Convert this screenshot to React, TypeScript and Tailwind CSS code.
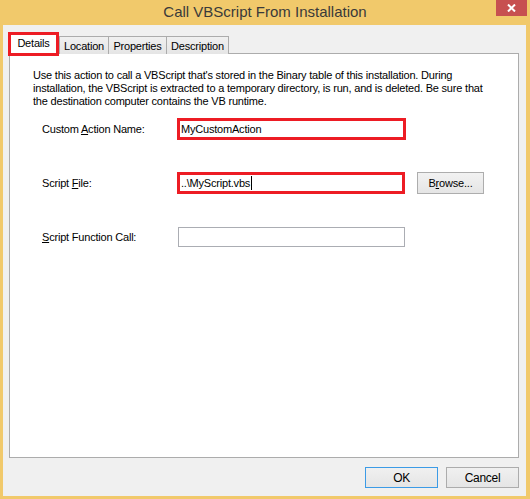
import type { ReactNode } from 'react';

const ui = "font-['Liberation_Sans',Arial,sans-serif] text-[11px] tracking-[-0.2px] text-black";

export default function App() {
  return (
    <div className={`flex h-[499px] w-[530px] flex-col bg-[#f1c96b] ${ui}`}>
      <TitleBar />
      <div className="ml-[3px] mr-[4px] mb-[3px] flex flex-1 flex-col bg-[#f0f0f0] pt-[6px] pl-[6px] pr-[7px]">
        <Tabs />
        <div className="flex h-[405px] w-[510px] flex-col border border-[#acacac] bg-white pt-[15px]">
          <p className="whitespace-nowrap pl-[23px] leading-[13px]">
            Use this action to call a VBScript that's stored in the Binary table of this installation. During
            <br />
            installation, the VBScript is extracted to a temporary directory, is run, and is deleted. Be sure that
            <br />
            the destination computer contains the VB runtime.
          </p>

          <div className="mt-[10px] flex items-center pl-[32px]">
            <Label>
              Custom <u>A</u>ction Name:
            </Label>
            <div className="flex h-[22px] w-[229px] items-center border-[3px] border-[#ed1c24] pl-[1px]">
              MyCustomAction
            </div>
          </div>

          <div className="mt-[32px] flex items-center pl-[32px]">
            <Label>
              Script <u>F</u>ile:
            </Label>
            <div className="flex h-[22px] w-[228px] items-center border-[3px] border-[#ed1c24] pl-[1px]">
              ..\MyScript.vbs
              <span className="ml-[1px] h-[14px] w-px bg-black" />
            </div>
            <button className="ml-[12px] h-[22px] w-[67px] border border-[#adadad] bg-gradient-to-b from-[#f2f2f2] to-[#e5e5e5]">
              B<u>r</u>owse...
            </button>
          </div>

          <div className="mt-[33px] flex items-center pl-[32px]">
            <Label>
              <u>S</u>cript Function Call:
            </Label>
            <div className="ml-[1px] h-[20px] w-[227px] border border-[#abadb3] bg-white" />
          </div>
        </div>

        <div className="mt-[9px] flex justify-end gap-[8px]">
          <DialogButton primary>OK</DialogButton>
          <DialogButton>Cancel</DialogButton>
        </div>
      </div>
    </div>
  );
}

function TitleBar() {
  return (
    <div className="relative flex h-[25px] items-center justify-center">
      <span className="font-['Liberation_Sans',Arial,sans-serif] text-[15px] tracking-normal text-[#3a3a3a]">
        Call VBScript From Installation
      </span>
      <div className="absolute right-[3px] top-0 flex h-[16px] w-[31px] items-center justify-center bg-[#c75050]">
        <svg width="9" height="8" viewBox="0 0 9 8">
          <path d="M1 0.5 L8 7.5 M8 0.5 L1 7.5" stroke="white" strokeWidth="2" />
        </svg>
      </div>
    </div>
  );
}

function Tabs() {
  return (
    <div className="relative z-10 -mb-px ml-[-1px] flex h-[23px] items-end">
      <div className="mb-[-2px] flex h-[24px] w-[51px] items-center justify-center border-[3px] border-[#ed1c24] bg-white pb-[1px]">
        Details
      </div>
      <Tab className="w-[50px]">Location</Tab>
      <Tab className="-ml-px w-[59px]">Properties</Tab>
      <Tab className="-ml-px w-[63px]">Description</Tab>
    </div>
  );
}

function Tab({ children, className }: { children: ReactNode; className: string }) {
  return (
    <div
      className={`flex h-[18px] items-center justify-center border border-b-0 border-[#acacac] bg-gradient-to-b from-[#f0f0f0] to-[#e5e5e5] pt-[1px] ${className}`}
    >
      {children}
    </div>
  );
}

function Label({ children }: { children: ReactNode }) {
  return <span className="w-[135px] flex-none">{children}</span>;
}

function DialogButton({ children, primary }: { children: ReactNode; primary?: boolean }) {
  return (
    <button
      className={`h-[21px] w-[73px] border bg-gradient-to-b from-[#f0f0f0] to-[#e5e5e5] text-[12px] tracking-[-0.3px] ${
        primary ? 'border-[#3c9be6]' : 'border-[#acacac]'
      }`}
    >
      {children}
    </button>
  );
}
